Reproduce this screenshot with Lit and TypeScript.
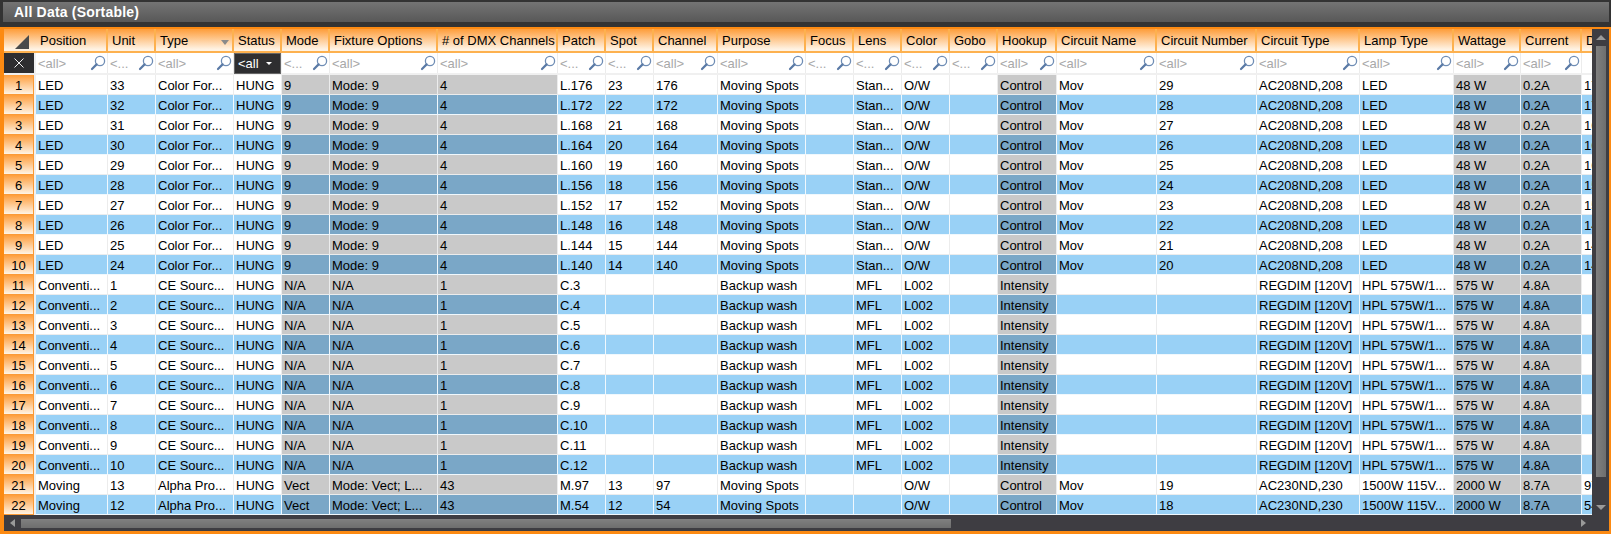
import { LitElement, html, css, svg } from "lit";
import { customElement } from "lit/decorators.js";

const COLS: [string, number, boolean][] = [
  ["Position", 72, false], ["Unit", 48, false], ["Type", 78, false], ["Status", 48, false],
  ["Mode", 48, true], ["Fixture Options", 108, true], ["# of DMX Channels", 120, true],
  ["Patch", 48, false], ["Spot", 48, false], ["Channel", 64, false], ["Purpose", 88, false],
  ["Focus", 48, false], ["Lens", 48, false], ["Color", 48, false], ["Gobo", 48, false],
  ["Hookup", 59, true], ["Circuit Name", 100, false], ["Circuit Number", 100, false],
  ["Circuit Type", 103, false], ["Lamp Type", 94, false], ["Wattage", 67, true], ["Current", 61, true], ["D", 48, false],
];
const TRACKS = "32px " + COLS.map((c) => c[1] + "px").join(" ");

const SHORT = new Set(["Unit", "Mode", "Patch", "Spot", "Focus", "Lens", "Color", "Gobo"]);

function row(i: number): string[] {
  if (i < 10) {
    const unit = 33 - i, ch = 176 - i * 4;
    return ["LED", String(unit), "Color For...", "HUNG", "9", "Mode: 9", "4", `L.${ch}`, String(23 - i), String(ch),
      "Moving Spots", "", "Stan...", "O/W", "", "Control", "Mov", String(29 - i), "AC208ND,208", "LED", "48 W", "0.2A", String(ch)];
  }
  if (i < 20) {
    const n = i - 9;
    return ["Conventi...", String(n), "CE Sourc...", "HUNG", "N/A", "N/A", "1", `C.${n + 2}`, "", "", "Backup wash", "",
      "MFL", "L002", "", "Intensity", "", "", "REGDIM [120V]", "HPL 575W/1...", "575 W", "4.8A", ""];
  }
  const a = i === 20;
  return ["Moving", a ? "13" : "12", "Alpha Pro...", "HUNG", "Vect", "Mode: Vect; L...", "43", a ? "M.97" : "M.54", a ? "13" : "12",
    a ? "97" : "54", "Moving Spots", "", "", "O/W", "", "Control", "Mov", a ? "19" : "18", "AC230ND,230", "1500W 115V...", "2000 W", "8.7A", a ? "97" : "54"];
}

const lens = svg`<svg class="lens" width="16" height="16" viewBox="0 0 16 16"><circle cx="10" cy="6" r="4.6" fill="#fff" stroke="#6f8db5" stroke-width="1.3"/><path d="M6.6 9.4 2 14" stroke="#5a7aa6" stroke-width="2.2" stroke-linecap="round"/></svg>`;

@customElement("app-root")
export class AppRoot extends LitElement {
  static styles = css`
    :host { display: block; width: 1611px; height: 534px; background: #3e3d42; overflow: hidden;
      font-family: "Liberation Sans", Arial, sans-serif; font-size: 13px; color: #000; }
    .page { display: flex; flex-direction: column; height: 534px; }
    .titlewrap { background: #333; padding: 2px 2px 5px 3px; height: 27px; box-sizing: border-box; flex: none; }
    .title { height: 20px; background: linear-gradient(#747474, #585858); color: #fff; font: bold 14px "Liberation Sans",sans-serif;
      letter-spacing: 0.2px; line-height: 21px; padding-left: 11px; }
    .frame { flex: 1; display: flex; flex-direction: column; border: solid #fc8a12; border-width: 2px 2px 3px 4px; background: #3e3d42; min-height: 0; }
    .body { flex: 1; display: flex; min-height: 0; }
    .view { width: 1588px; flex: none; overflow: hidden; background: #f0f0f0; }
    .grid { display: grid; grid-template-columns: ${css([TRACKS] as unknown as TemplateStringsArray)}; grid-template-rows: 24px 20px 2px; grid-auto-rows: 20px; width: max-content; }
    .grid > * { box-sizing: border-box; min-width: 0; overflow: hidden; white-space: nowrap; }
    .hd { background: linear-gradient(#fe9d3a, #fff3e4 92%); border-bottom: 2px solid #fdb14f; border-right: 2px solid #fdb14f;
      padding-left: 4px; line-height: 24px; position: relative; }
    .corner { background: linear-gradient(#fe9d3a, #fff3e4 92%); border-bottom: 2px solid #fdb14f; position: relative; }
    .corner svg { position: absolute; right: 7px; top: 6px; }
    .sort { position: absolute; right: 3px; top: 11px; width: 0; height: 0; border: 4.5px solid transparent; border-top: 5px solid #8a8a8a; border-bottom: 0; }
    .x { background: #2e2e30; margin-right: 2px; display: flex; align-items: center; justify-content: center; }
    .f { background: #fff; border-right: 1px solid #ececec; color: #a8a8a8; padding-left: 2px; line-height: 21px; position: relative; }
    .lens { position: absolute; right: 1px; top: 2px; }
    .fs { height: 21px; margin: 0 1px -1px 0; align-self: start; z-index: 1; background: #2e2e30; color: #fff; padding-left: 3px; line-height: 20px; position: relative; border: 1px solid #666; }
    .fs::after { content: ""; position: absolute; right: 8px; top: 8px; border: 3px solid transparent; border-top: 3px solid #fff; border-bottom: 0; }
    .gap { grid-column: 1 / -1; background: #f0f0f0; }
    .rh { background: linear-gradient(#fe9d3a, #fff3e4); margin-right: 2px; border-right: 1px solid #fb9a36; border-bottom: 1px solid #fb9a36; text-align: center; line-height: 21px; }
    .c { background: #fff; border-right: 1px solid #ececec; border-bottom: 1px solid #ececec; padding-left: 2px; line-height: 21px; }
    .c.alt { background: #99d1f6; border-right-color: #f0f8fd; border-bottom-color: #f0f8fd; }
    .c.ro { background: #c9c9c9; }
    .c.ro.alt { background: #7aa7c7; }
    .hbar { height: 16px; flex: none; position: relative; background: #3e3d42; }
    .vbar { flex: 1; position: relative; background: #3e3d42; }
    .vthumb { position: absolute; left: 4px; width: 10px; top: 17px; bottom: 38px; background: linear-gradient(90deg,#808080,#6e6e6e); }
    .hthumb { position: absolute; left: 17px; width: 930px; top: 4px; height: 9px; background: linear-gradient(#808080,#6e6e6e); }
    .up { position: absolute; left: 4px; top: 6px; border: 5px solid transparent; border-bottom: 5px solid #9a9a9a; border-top: 0; }
    .dn { position: absolute; left: 4px; bottom: 5px; border: 5px solid transparent; border-top: 5px solid #9a9a9a; border-bottom: 0; }
    .lt { position: absolute; left: 6px; top: 4px; border: 4.5px solid transparent; border-right: 5px solid #9a9a9a; border-left: 0; }
    .rt { position: absolute; left: 1577px; top: 4px; border: 4.5px solid transparent; border-left: 5px solid #9a9a9a; border-right: 0; }
  `;

  render() {
    return html`<div class="page">
      <div class="titlewrap"><div class="title">All Data (Sortable)</div></div>
      <div class="frame">
        <div class="body">
          <div class="view"><div class="grid">
            <div class="corner"><svg width="14" height="14" viewBox="0 0 14 14"><path d="M14 0V14H0Z" fill="#4a4a4a"/></svg></div>
            ${COLS.map(([n]) => html`<div class="hd">${n}${n === "Type" ? html`<span class="sort"></span>` : ""}</div>`)}
            <div class="x"><svg width="12" height="12" viewBox="0 0 12 12"><path d="M1.5 1.5 10.5 10.5M10.5 1.5 1.5 10.5" stroke="#eee" stroke-width="1"/></svg></div>
            ${COLS.map(([n]) => n === "Status"
              ? html`<div class="fs">&lt;all</div>`
              : n === "D" ? html`<div class="f"></div>`
              : html`<div class="f">${SHORT.has(n) ? "<..." : "<all>"}${lens}</div>`)}
            <div class="gap"></div>
            ${Array.from({ length: 22 }, (_, i) => html`
              <div class="rh">${i + 1}</div>
              ${row(i).map((v, k) => html`<div class="c ${i % 2 ? "alt" : ""} ${COLS[k][2] ? "ro" : ""}">${v}</div>`)}
            `)}
          </div></div>
          <div class="vbar"><i class="up"></i><div class="vthumb"></div><i class="dn"></i></div>
        </div>
        <div class="hbar"><i class="lt"></i><div class="hthumb"></div><i class="rt"></i></div>
      </div>
    </div>`;
  }
}
